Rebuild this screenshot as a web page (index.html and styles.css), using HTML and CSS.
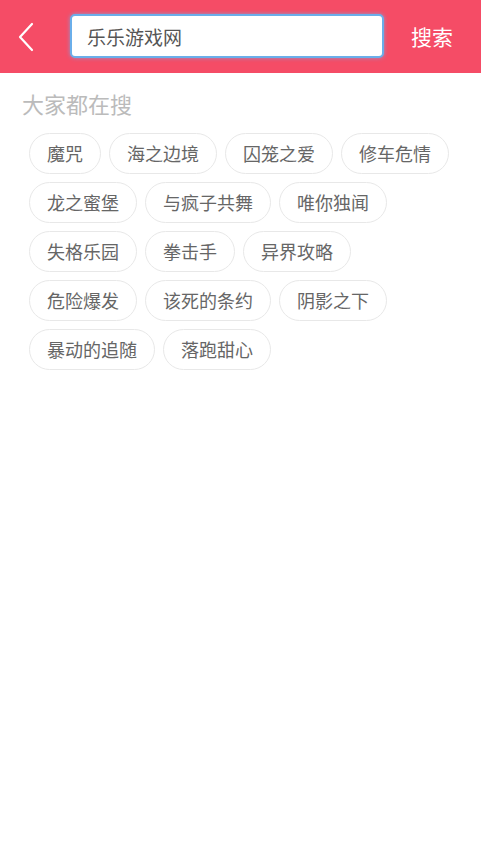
FILE: index.html
```html
<!DOCTYPE html>
<html lang="zh">
<head>
  <meta charset="UTF-8">
  <title>搜索</title>
  <meta name="viewport" content="width=device-width, initial-scale=1.0">
  <link rel="stylesheet" href="styles.css">
</head>
<body>

  <div class="header">
    <a class="back" href="#">
      <svg width="20" height="32" viewBox="0 0 20 32">
        <path d="M15 3 L3 16 L15 29" fill="none" stroke="#fff" stroke-width="2.2" stroke-linecap="round" stroke-linejoin="round"/>
      </svg>
    </a>
    <div class="search-box">
      <input type="text" value="乐乐游戏网">
    </div>
    <button class="search-btn">搜索</button>
  </div>

  <div class="hot">
    <h3>大家都在搜</h3>
    <div class="tags">
      <span class="tag">魔咒</span>
      <span class="tag">海之边境</span>
      <span class="tag">囚笼之爱</span>
      <span class="tag">修车危情</span>
      <span class="tag">龙之蜜堡</span>
      <span class="tag">与疯子共舞</span>
      <span class="tag">唯你独闻</span>
      <span class="tag">失格乐园</span>
      <span class="tag">拳击手</span>
      <span class="tag">异界攻略</span>
      <span class="tag">危险爆发</span>
      <span class="tag">该死的条约</span>
      <span class="tag">阴影之下</span>
      <span class="tag">暴动的追随</span>
      <span class="tag">落跑甜心</span>
    </div>
  </div>

</body>
</html>
```

FILE: styles.css
```css
body {
  margin: 0;
  font-family: "Noto Sans CJK SC", "Noto Sans", sans-serif;
  background: #fff;
}
.header {
  height: 73px;
  background: #f54c66;
  display: flex;
  align-items: center;
}
.back {
  width: 70px;
  display: flex;
  padding-left: 17px;
  box-sizing: border-box;
}
.search-box {
  width: 314px;
  height: 44px;
  box-sizing: border-box;
  border: 2px solid #6aaeea;
  border-radius: 5px;
  background: #fff;
  box-shadow: 0 0 4px rgba(120, 170, 230, 0.8);
  margin-top: -1px;
}
.search-box input {
  border: none;
  outline: none;
  background: transparent;
  width: 100%;
  height: 100%;
  padding: 0 0 0 15px;
  box-sizing: border-box;
  font-family: inherit;
  font-size: 19px;
  color: #555;
}
.search-btn {
  border: none;
  background: none;
  color: #fff;
  font-family: inherit;
  font-size: 21px;
  padding: 0;
  margin-left: 27px;
  margin-top: -2px;
}
.hot h3 {
  margin: 0;
  padding: 14px 0 0 22px;
  font-size: 22px;
  font-weight: normal;
  color: #bbb;
  line-height: 32px;
}
.tags {
  display: flex;
  flex-wrap: wrap;
  gap: 8px;
  padding: 14px 20px 0 29px;
}
.tag {
  border: 1px solid #e8e8e8;
  border-radius: 21px;
  padding: 0 17px;
  height: 39px;
  line-height: 39px;
  font-size: 18px;
  color: #666;
}
```
